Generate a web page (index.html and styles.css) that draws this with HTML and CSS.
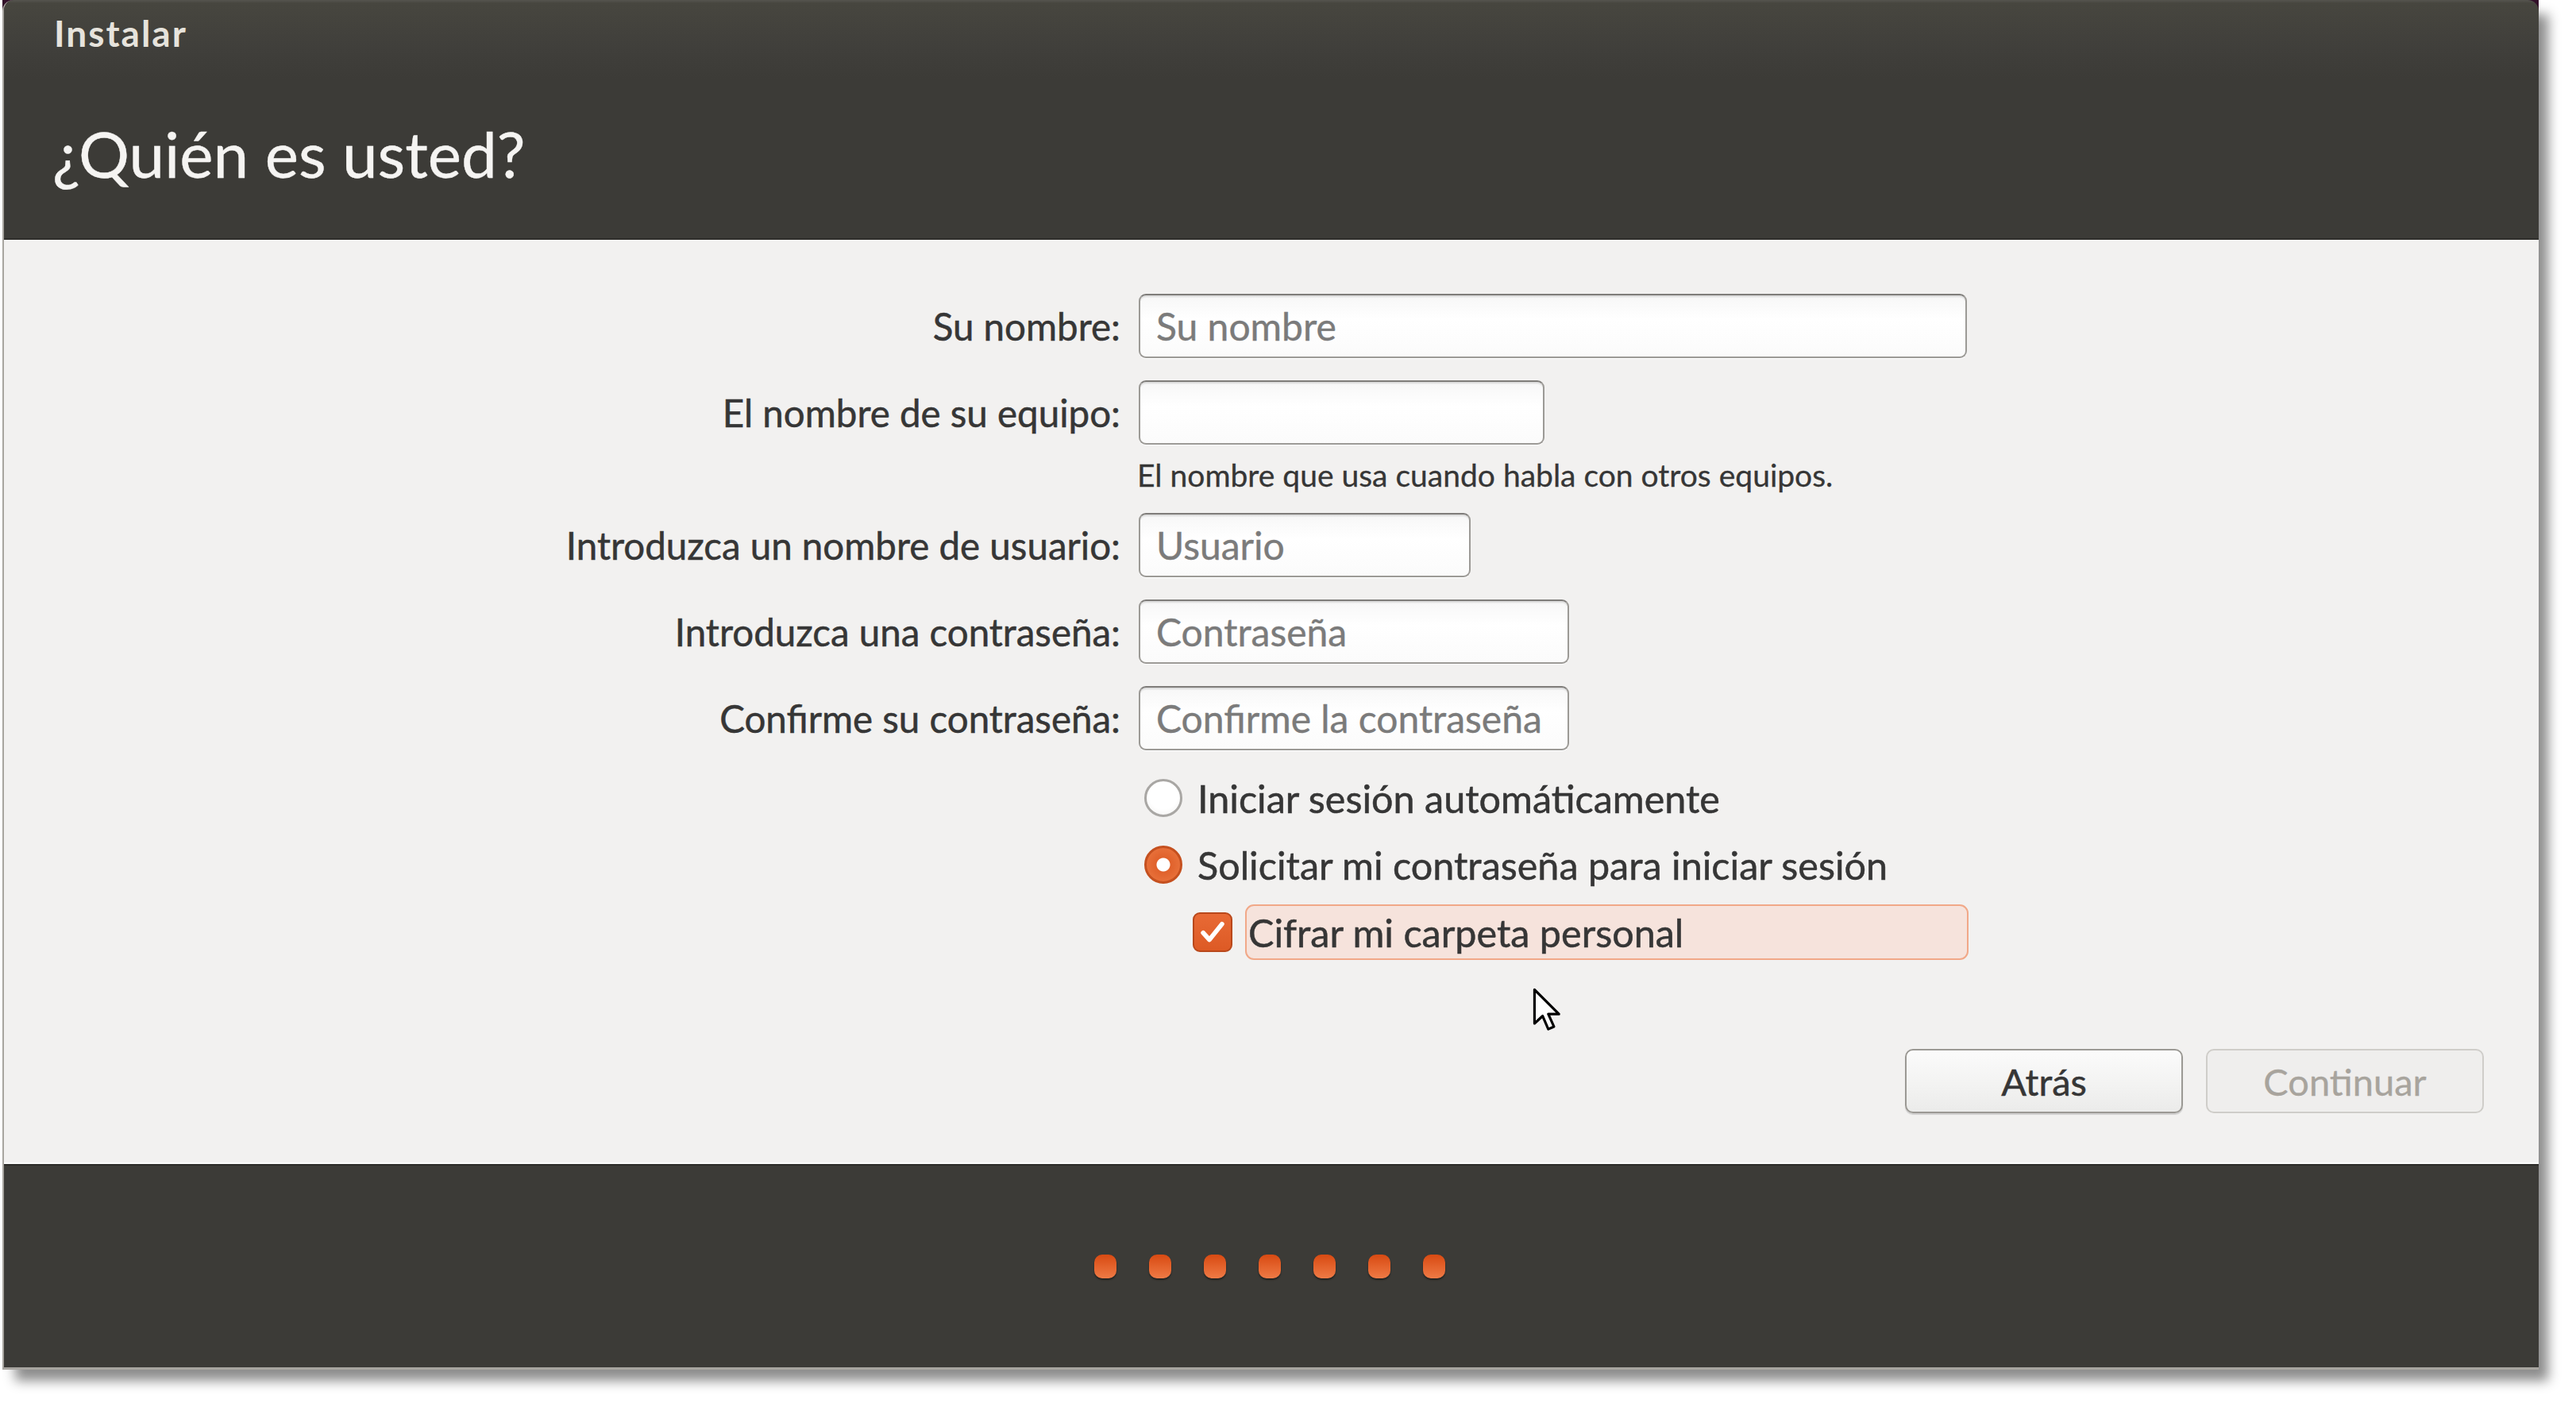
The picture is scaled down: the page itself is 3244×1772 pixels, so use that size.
FILE: index.html
```html
<!DOCTYPE html>
<html lang="es">
<head>
<meta charset="utf-8">
<title>Instalar</title>
<link rel="stylesheet" href="styles.css">
</head>
<body>
<div class="window">
  <div class="frame">
    <header class="header">
      <div class="title">Instalar</div>
      <h1 class="heading">¿Quién es usted?</h1>
    </header>
    <main class="content">
      <div class="form">
        <label class="lbl r-name">Su nombre:</label>
        <div class="field f-name r-name"><span class="ph">Su nombre</span></div>

        <label class="lbl r-host">El nombre de su equipo:</label>
        <div class="field f-host r-host"></div>

        <div class="help">El nombre que usa cuando habla con otros equipos.</div>

        <label class="lbl r-user">Introduzca un nombre de usuario:</label>
        <div class="field f-user r-user"><span class="ph">Usuario</span></div>

        <label class="lbl r-pass">Introduzca una contraseña:</label>
        <div class="field f-pass r-pass"><span class="ph">Contraseña</span></div>

        <label class="lbl r-conf">Confirme su contraseña:</label>
        <div class="field f-pass r-conf"><span class="ph">Confirme la contraseña</span></div>

        <div class="option opt-auto">
          <span class="radio"></span>
          <span class="opt-text">Iniciar sesión automáticamente</span>
        </div>
        <div class="option opt-pass">
          <span class="radio checked"></span>
          <span class="opt-text">Solicitar mi contraseña para iniciar sesión</span>
        </div>
        <div class="option opt-crypt">
          <span class="checkbox">
            <svg viewBox="0 0 24 24" width="38" height="38"><path d="M4.5 12.5 L9.5 18 L19.5 5.5" fill="none" stroke="#fff" stroke-width="3.6" stroke-linecap="round" stroke-linejoin="round"/></svg>
          </span>
          <span class="crypt-text">Cifrar mi carpeta personal</span>
        </div>
      </div>
      <div class="buttons">
        <button class="btn">Atrás</button>
        <button class="btn disabled">Continuar</button>
      </div>
      <svg class="cursor" viewBox="0 0 24 38" width="38" height="60">
        <path d="M1.5 1.5 L1.5 28.5 L8 22.5 L12.5 33 L17 31 L12.5 21 L21 21 Z" fill="#fff" stroke="#000" stroke-width="2" stroke-linejoin="round"/>
      </svg>
    </main>
    <footer class="footer">
      <div class="dots">
        <span class="dot"></span><span class="dot"></span><span class="dot"></span><span class="dot"></span><span class="dot"></span><span class="dot"></span><span class="dot"></span>
      </div>
    </footer>
  </div>
</div>
</body>
</html>
```
FILE: styles.css
```css
html, body {
  margin: 0;
  padding: 0;
}
body {
  width: 3244px;
  height: 1772px;
  background: #ffffff;
  font-family: Lato, "Open Sans", sans-serif;
  overflow: hidden;
}
.window {
  margin-left: 3px;
  width: 3194px;
  background: linear-gradient(#33102a, #33102a) top / 100% 20px no-repeat;
  box-shadow: 14px 16px 14px -2px rgba(0, 0, 0, 0.45);
}
.frame {
  border-radius: 14px 14px 0 0;
  overflow: hidden;
  border-left: 2px solid #a8a5a0;
  border-bottom: 3px solid #a8a5a0;
  position: relative;
}
.header {
  height: 302px;
  box-sizing: border-box;
  padding: 19px 0 0 63px;
  background: linear-gradient(#55544f 0, #47463f 4px, #403f3b 60px, #3c3b37 100px, #3c3b37 100%);
  border-bottom: 2px solid #2f2e2b;
}
.title {
  font-weight: 700;
  font-size: 46px;
  line-height: 46px;
  letter-spacing: 2px;
  color: #e6e3dc;
}
.heading {
  margin: 86px 0 0 -2px;
  font-weight: 400;
  font-size: 80px;
  line-height: 84px;
  color: #f5f4f2;
  -webkit-text-stroke: 0.4px #f5f4f2;
}
.content {
  position: relative;
  height: 1164px;
  box-sizing: border-box;
  background: #f2f1f0;
  border-bottom: 2px solid #fbfbfa;
  padding-top: 68px;
  color: #363636;
}
.form {
  display: grid;
  grid-template-columns: 1406px 1fr;
  column-gap: 23px;
  font-size: 48px;
  -webkit-text-stroke: 0.5px #363636;
}
.lbl {
  grid-column: 1;
  text-align: right;
  align-self: center;
  white-space: nowrap;
  font-size: 47.5px;
}
.field {
  grid-column: 2;
  height: 81px;
  box-sizing: border-box;
  border: 2px solid #9c9a96;
  border-top-color: #7f7d7a;
  border-radius: 9px;
  background: linear-gradient(#f7f7f7, #ffffff 40%, #fbfbfb);
  box-shadow: inset 0 3px 2px -1px rgba(0, 0, 0, 0.12), 0 1px 0 #ffffff;
  display: flex;
  align-items: center;
  padding-left: 20px;
}
.ph {
  color: #7b7b7b;
  -webkit-text-stroke: 0.4px #7b7b7b;
}
.f-name { width: 1043px; }
.f-host { width: 511px; }
.f-user { width: 418px; }
.f-pass { width: 542px; }
.r-host, .r-conf, .r-pass { margin-top: 28px; }
.help {
  grid-column: 2;
  font-size: 39px;
  line-height: 44px;
  margin-top: 16px;
  margin-left: -2px;
  -webkit-text-stroke: 0.3px #363636;
}
.r-user { margin-top: 26px; }
.option {
  grid-column: 2;
  display: flex;
  align-items: center;
  height: 50px;
  font-size: 48.5px;
}
.opt-auto { margin-top: 35px; margin-left: 7px; }
.opt-pass { margin-top: 34px; margin-left: 7px; }
.opt-crypt { margin-top: 25px; margin-left: 68px; height: 70px; }
.radio {
  width: 48px;
  height: 48px;
  box-sizing: border-box;
  border-radius: 50%;
  border: 3px solid #a9a7a4;
  background: radial-gradient(circle at 50% 40%, #ffffff 55%, #f0efee 100%);
  margin-right: 19px;
  flex: none;
}
.radio.checked {
  border: 3px solid #c5501f;
  background: radial-gradient(circle, #ffffff 0 8px, #e0612b 9px, #ec7a44 100%);
}
.opt-text {
  white-space: nowrap;
}
.checkbox {
  width: 50px;
  height: 50px;
  box-sizing: border-box;
  border-radius: 9px;
  border: 2px solid #b9481b;
  background: linear-gradient(#e86a35, #dd5a25);
  display: flex;
  align-items: center;
  justify-content: center;
  margin-right: 16px;
  flex: none;
}
.crypt-text {
  width: 911px;
  height: 70px;
  box-sizing: border-box;
  border: 2px solid #f1a888;
  border-radius: 11px;
  background: #f6e3dc;
  display: flex;
  align-items: center;
  padding-left: 2px;
}
.buttons {
  display: flex;
  justify-content: flex-end;
  gap: 29px;
  padding-right: 69px;
  margin-top: 112px;
}
.btn {
  width: 350px;
  height: 81px;
  font-family: Lato, "Open Sans", sans-serif;
  font-size: 47px;
  color: #363636;
  -webkit-text-stroke: 0.5px #363636;
  border: 2px solid #9b9994;
  border-radius: 10px;
  background: linear-gradient(#fbfbfb, #f2f2f1 60%, #ebebea);
  box-shadow: inset 0 2px 0 #ffffff, 0 2px 1px rgba(0, 0, 0, 0.15);
  padding: 0;
}
.btn.disabled {
  color: #a8a49d;
  -webkit-text-stroke: 0.3px #a8a49d;
  border-color: #cfcdc9;
  background: #efeeed;
  box-shadow: none;
}
.cursor {
  position: absolute;
  left: 1925px;
  top: 942px;
}
.footer {
  height: 256px;
  box-sizing: border-box;
  background: #3c3b37;
  border-top: 2px solid #2c2b28;
  display: flex;
  align-items: center;
  justify-content: center;
}
.dots {
  display: flex;
  gap: 41px;
  margin-left: -4px;
}
.dot {
  width: 28px;
  height: 30px;
  border-radius: 10px;
  background: linear-gradient(#d84a12, #ef7a45);
  box-shadow: 0 2px 2px rgba(0, 0, 0, 0.45);
}
```
